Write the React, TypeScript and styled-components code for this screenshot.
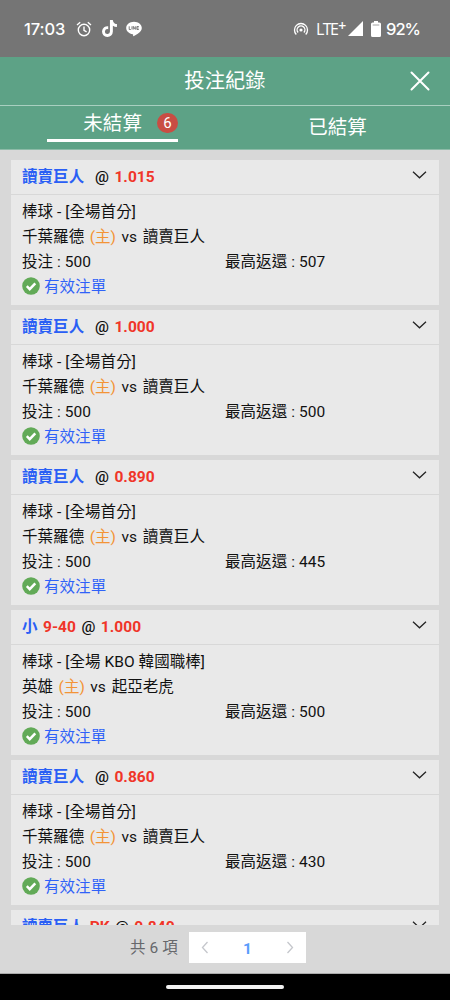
import React from 'react';
import styled, { createGlobalStyle } from 'styled-components';
import { FaTiktok } from 'react-icons/fa6';

const GlobalStyle = createGlobalStyle`
  * { box-sizing: border-box; }
  body { margin: 0; background: #d8d8d8; }
`;

const Screen = styled.div`
  width: 450px;
  height: 1000px;
  display: flex;
  flex-direction: column;
  overflow: hidden;
  background: #d8d8d8;
  color: #111;
  font-family: Roboto, 'Noto Sans CJK TC', sans-serif;
  font-size: 15.5px;
  letter-spacing: 0.06px;
`;

const StatusBar = styled.div`
  height: 57px;
  flex: none;
  display: flex;
  align-items: center;
  justify-content: space-between;
  padding: 0 31px 0 24px;
  background: #757575;
  color: #fff;
`;

const StatusGroup = styled.div`
  display: flex;
  align-items: center;
  svg { display: block; flex: none; }
`;

const BatterySlot = styled.span`
  margin: 0 5px 0 8px;
`;

const AppIcons = styled.div`
  display: flex;
  align-items: center;
  gap: 8.5px;
  svg { display: block; }
`;

const StatusText = styled.span<{ $width: number; $spacing: number }>`
  width: ${(p) => p.$width}px;
  font: 500 16.5px/20px Inter, sans-serif;
  white-space: nowrap;
  letter-spacing: ${(p) => p.$spacing}px;
`;

const Network = styled.span`
  display: flex;
  width: 32px;
  margin-left: 7px;
  font: 400 16px/20px 'Open Sans', sans-serif;
  letter-spacing: -1.6px;
  white-space: nowrap;
`;

const Plus = styled.span`
  margin-left: 1px;
  font-weight: 600;
  font-size: 14px;
  line-height: 14px;
`;

const TitleBar = styled.header`
  height: 49px;
  flex: none;
  display: grid;
  grid-template-columns: 60px 1fr 60px;
  align-items: center;
  justify-items: center;
  background: #5da286;
  border-bottom: 1px solid #a9cfc0;
  color: #fff;
`;

const Title = styled.h1`
  grid-column: 2;
  margin: 0;
  font-size: 20.3px;
  font-weight: 400;
  line-height: 30px;
`;

const CloseButton = styled.button`
  padding: 0;
  border: 0;
  background: none;
  color: inherit;
  svg { display: block; margin-bottom: 1px; }
`;

const Tabs = styled.nav`
  height: 44px;
  flex: none;
  display: grid;
  grid-template-columns: 1fr 1fr;
  justify-items: center;
  background: #5da286;
  border-bottom: 1px solid #8dbba8;
  color: #fff;
  font-size: 19.5px;
  line-height: 29px;
`;

const Tab = styled.div<{ $active?: boolean }>`
  width: 131px;
  height: ${(p) => (p.$active ? 36 : 42)}px;
  display: flex;
  align-items: ${(p) => (p.$active ? 'flex-start' : 'center')};
  justify-content: ${(p) => (p.$active ? 'flex-end' : 'center')};
  padding-top: ${(p) => (p.$active ? 3 : 0)}px;
  border-bottom: ${(p) => (p.$active ? '3px solid #fff' : '0')};
`;

const Badge = styled.span`
  width: 21px;
  height: 20px;
  margin: 4px 0 0 15px;
  border-radius: 10px;
  background: #c94d43;
  font-size: 15px;
  line-height: 21px;
  text-align: center;
`;

const BetList = styled.main`
  height: 775px;
  flex: none;
  display: flex;
  flex-direction: column;
  gap: 5px;
  padding: 10px 11px 0;
  overflow: hidden;
`;

const BetCard = styled.article`
  height: 145px;
  flex: none;
  background: #e9e9e9;
`;

const BetHeader = styled.div`
  height: 35px;
  display: flex;
  align-items: center;
  gap: 5.4px;
  padding: 0 12px 1px 11px;
  border-bottom: 1px solid #d8d8d8;
  font-weight: 500;
  line-height: 24px;
  svg { margin: 0 0 4px auto; }
`;

const Pick = styled.span`
  color: #2a5ff5;
  font-weight: 700;
`;

const Odds = styled.span`
  color: #f03528;
  font-weight: 700;
`;

const BetBody = styled.div`
  padding: 5px 11px 0;
`;

const Line = styled.div`
  height: 25px;
  display: flex;
  align-items: center;
  line-height: 25px;
  white-space: pre;
`;

const Home = styled.span`
  color: #f39436;
  margin: 0 5.4px;
`;

const Versus = styled.span`
  margin-right: 5.7px;
`;

const Stake = styled.span`
  width: 203px;
`;

const Valid = styled(Line)`
  gap: 4px;
  color: #2f62f8;
  svg { margin-bottom: 3px; }
`;

const Footer = styled.footer`
  height: 49px;
  flex: none;
  display: flex;
  align-items: flex-start;
  padding: 7px 0 0 130px;
  border-bottom: 1px solid #aaa;
  color: #66676b;
`;

const Total = styled.span`
  width: 59px;
  line-height: 31px;
  padding-top: 1px;
`;

const Pager = styled.div`
  width: 117px;
  height: 31px;
  display: grid;
  grid-template-columns: 32px 1fr 32px;
  place-items: center;
  background: #fff;
  svg { margin-bottom: 2px; }
`;

const PageNumber = styled.span`
  color: #5a9cfc;
  font-weight: 700;
  line-height: 31px;
  padding-top: 2px;
`;

const GestureBar = styled.div`
  flex: 1;
  display: flex;
  justify-content: center;
  padding-top: 11px;
  background: #000;
`;

const Handle = styled.div`
  width: 118px;
  height: 4px;
  border-radius: 2px;
  background: #f2f2f2;
`;

const AlarmIcon = () => (
  <svg width="16" height="16" viewBox="0 0 16 16" fill="none" stroke="#fff" strokeWidth="1.4">
    <circle cx="8" cy="9" r="5.7" />
    <path d="M8 5.5v3.8l2.6 1.6M1 4l3.2-2.7M15 4l-3.2-2.7" />
  </svg>
);

const LineIcon = () => (
  <svg width="16" height="16" viewBox="0 0 16 16">
    <path d="M8 .7C3.7.7.2 3.5.2 7c0 3.1 2.8 5.7 6.5 6.2.6.1.5.6.4 1.5 0 .5.3.6.8.4 2.4-1.3 7.9-4.3 7.9-8.1C15.8 3.5 12.3.7 8 .7Z" fill="#fff" />
    <path d="M3.2 5.3v3.2h1.6M6 5.3v3.2M7.3 8.5V5.4l2 3V5.3M12.8 5.5h-1.9v3h1.9M10.9 7h1.8" fill="none" stroke="#757575" strokeWidth=".95" />
  </svg>
);

const HotspotIcon = () => (
  <svg width="16" height="16" viewBox="0 0 16 16" fill="none" stroke="#fff" strokeWidth="1.35">
    <path d="M3.3 13.5a6.5 6.5 0 1 1 9.4 0M5.1 11.5a3.9 3.9 0 1 1 5.8 0" />
    <circle cx="8" cy="9" r="1.6" fill="#fff" stroke="none" />
  </svg>
);

const SignalIcon = () => (
  <svg width="15" height="15" viewBox="0 0 15 15" fill="#fff"><path d="M15 0v15H0Z" /></svg>
);

const BatteryIcon = () => (
  <svg width="10" height="16" viewBox="0 0 10 16">
    <path d="M3 0h4v1.5h1.5Q10 1.5 10 3v11.5Q10 16 8.5 16h-7Q0 16 0 14.5V3q0-1.5 1.5-1.5H3Z" fill="#fff" />
    <path d="M1.7 4h6.6" stroke="#8c8c8c" strokeWidth=".8" />
  </svg>
);

const CloseIcon = () => (
  <svg width="20" height="20" viewBox="0 0 20 20" fill="none" stroke="#fff" strokeWidth="2" strokeLinecap="round">
    <path d="m1.5 1.500 17 17m0-17-17 17" />
  </svg>
);

const ExpandIcon = () => (
  <svg width="15" height="8" viewBox="0 0 15 8" fill="none" stroke="#222" strokeWidth="1.25">
    <path d="m1 .8 6.500 6L14 .8" />
  </svg>
);

const CheckIcon = () => (
  <svg width="18" height="18" viewBox="0 0 18 18">
    <circle cx="9" cy="9" r="8.8" fill="#62aa57" />
    <path d="m4.8 9.200 2.900 2.900 5.600-5.700" fill="none" stroke="#fff" strokeWidth="2.5" />
  </svg>
);

const PageArrow = ({ next = false }: { next?: boolean }) => (
  <svg width="8" height="13" viewBox="0 0 8 13" fill="none" stroke="#c5c7cc" strokeWidth="1.3">
    <path d={next ? 'm1.5 1 5 5.500-5 5.500' : 'm6.500 1-5 5.500 5 5.500'} />
  </svg>
);

interface Selection {
  pick: string;
  handicap: string;
  odds: string;
}

interface Bet extends Selection {
  market: string;
  home: string;
  away: string;
  payout: string;
}

const giants = { pick: '讀賣巨人', handicap: '', market: '全場首分', home: '千葉羅德', away: '讀賣巨人' };

const bets: Bet[] = [
  { ...giants, odds: '1.015', payout: '507' },
  { ...giants, odds: '1.000', payout: '500' },
  { ...giants, odds: '0.890', payout: '445' },
  { pick: '小', handicap: '9-40', odds: '1.000', market: '全場 KBO 韓國職棒', home: '英雄', away: '起亞老虎', payout: '500' },
  { ...giants, odds: '0.860', payout: '430' },
];

const BetHeading = ({ pick, handicap, odds }: Selection) => (
  <BetHeader>
    <Pick>{pick}</Pick>
    <Odds>{handicap}</Odds>
    <span>@</span>
    <Odds>{odds}</Odds>
    <ExpandIcon />
  </BetHeader>
);

export default function App() {
  return (
    <Screen>
      <GlobalStyle />
      <StatusBar>
        <StatusGroup>
          <StatusText $width={52} $spacing={-0.1}>17:03</StatusText>
          <AppIcons><AlarmIcon /><FaTiktok size={17} /><LineIcon /></AppIcons>
        </StatusGroup>
        <StatusGroup>
          <HotspotIcon />
          <Network>LTE<Plus>+</Plus></Network>
          <SignalIcon />
          <BatterySlot><BatteryIcon /></BatterySlot>
          <StatusText $width={33} $spacing={-1}>92%</StatusText>
        </StatusGroup>
      </StatusBar>
      <TitleBar>
        <Title>投注紀錄</Title>
        <CloseButton aria-label="關閉"><CloseIcon /></CloseButton>
      </TitleBar>
      <Tabs>
        <Tab $active>未結算<Badge>6</Badge></Tab>
        <Tab>已結算</Tab>
      </Tabs>
      <BetList>
        {bets.map((bet, i) => (
          <BetCard key={i}>
            <BetHeading pick={bet.pick} handicap={bet.handicap} odds={bet.odds} />
            <BetBody>
              <Line>棒球 - [{bet.market}]</Line>
              <Line>{bet.home}<Home>(主)</Home><Versus>vs</Versus>{bet.away}</Line>
              <Line><Stake>投注 : 500</Stake><span>最高返還 : {bet.payout}</span></Line>
              <Valid><CheckIcon />有效注單</Valid>
            </BetBody>
          </BetCard>
        ))}
        <BetCard>
          <BetHeading pick="讀賣巨人" handicap="PK" odds="0.840" />
        </BetCard>
      </BetList>
      <Footer>
        <Total>共 6 項</Total>
        <Pager><PageArrow /><PageNumber>1</PageNumber><PageArrow next /></Pager>
      </Footer>
      <GestureBar><Handle /></GestureBar>
    </Screen>
  );
}
